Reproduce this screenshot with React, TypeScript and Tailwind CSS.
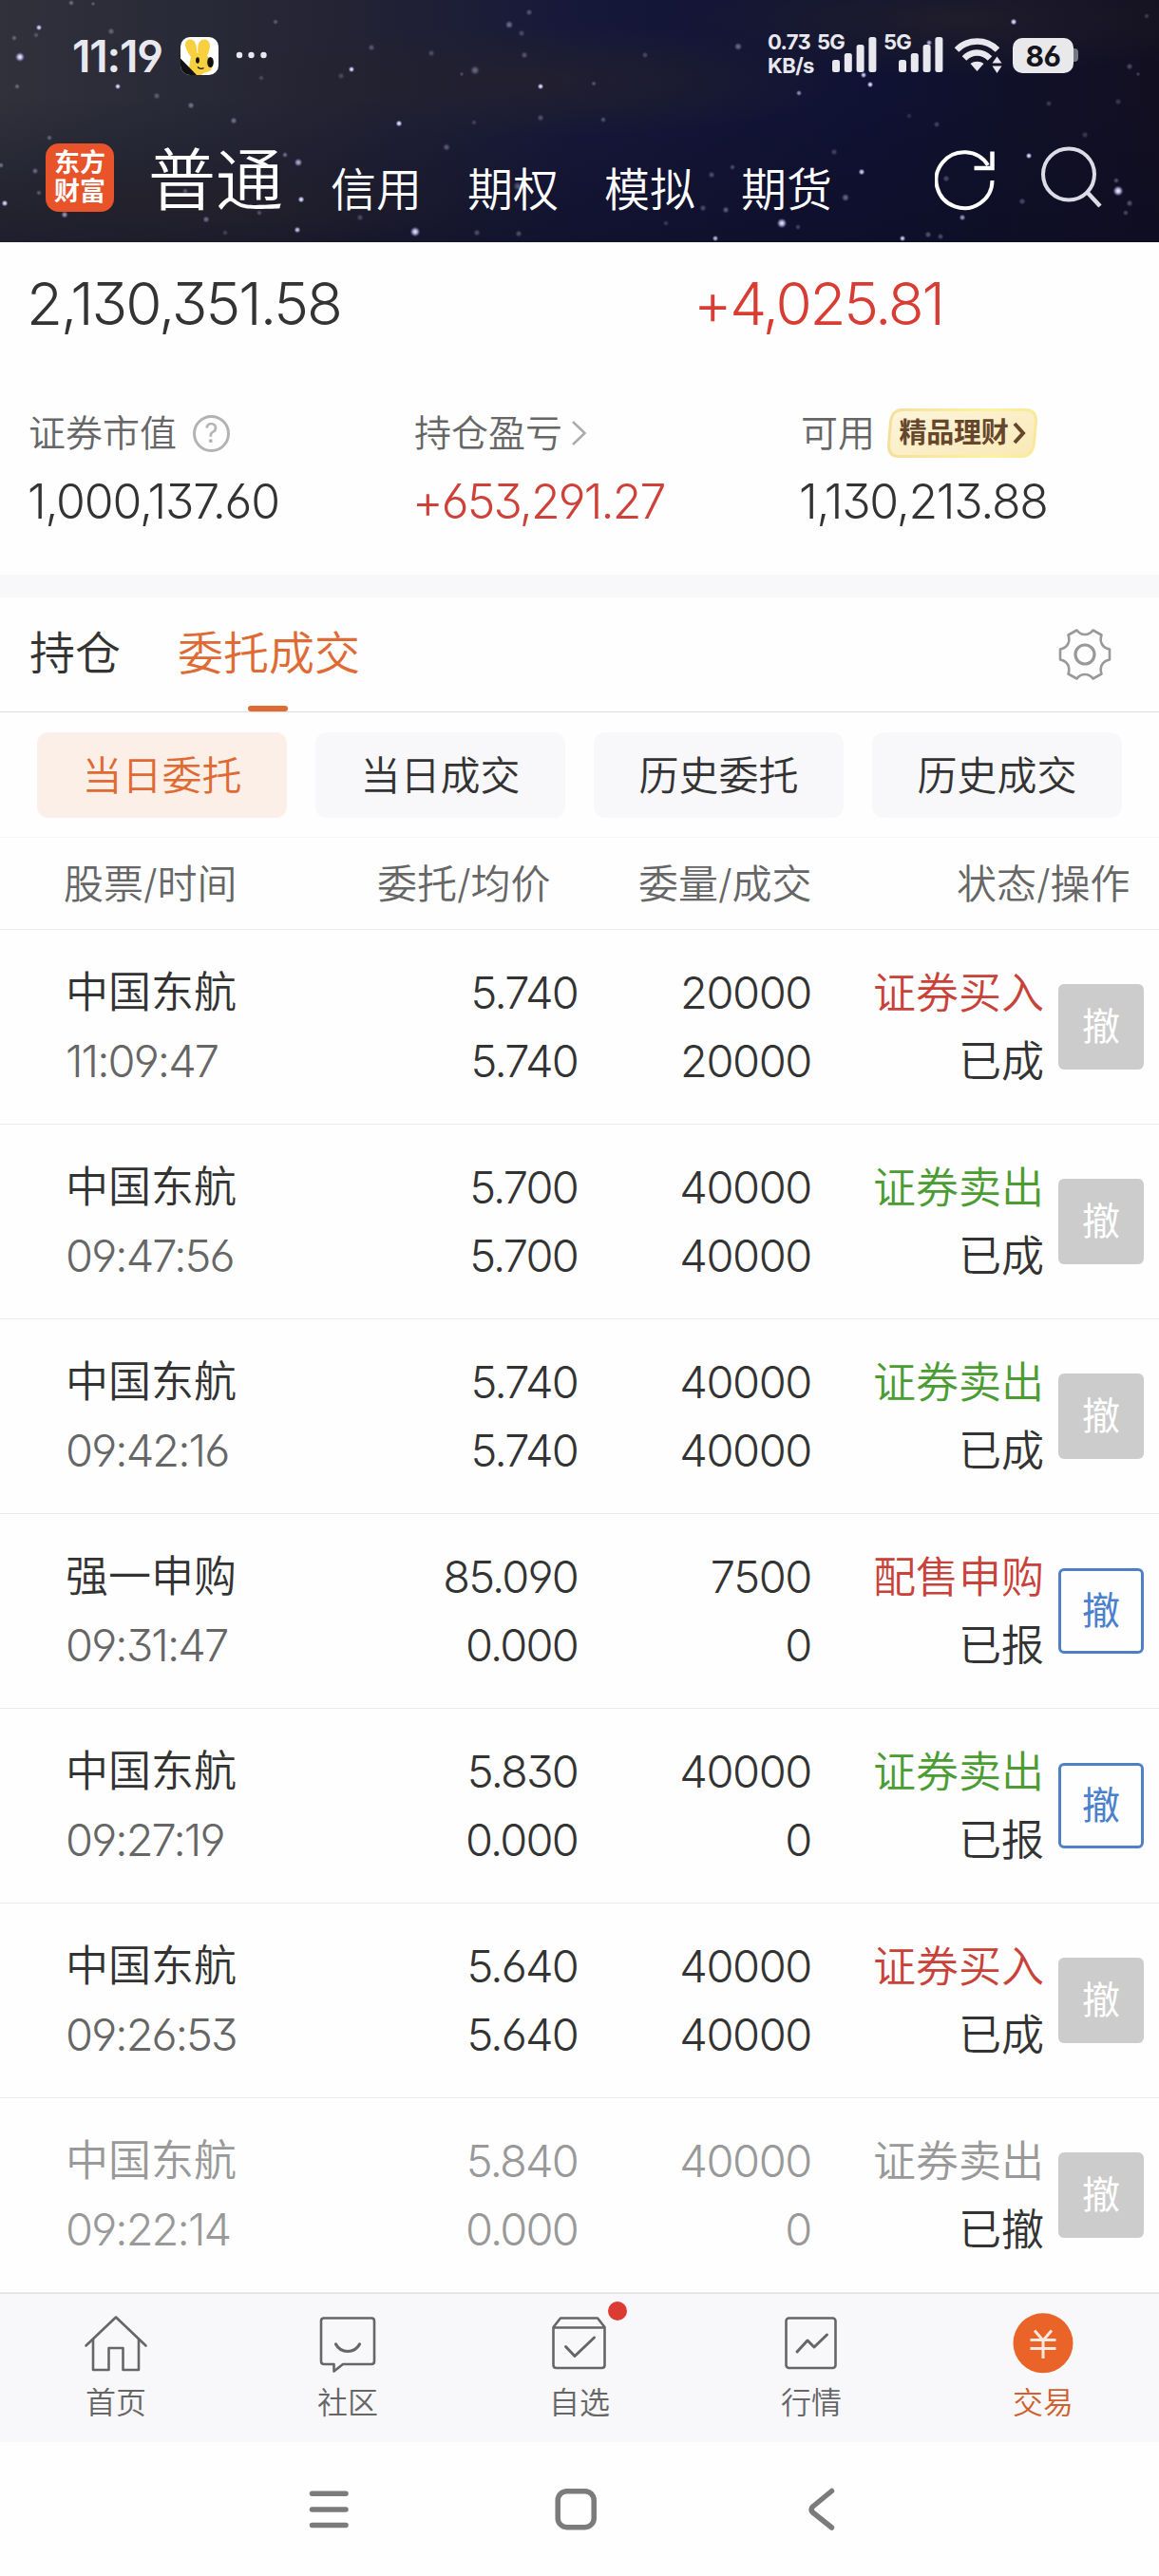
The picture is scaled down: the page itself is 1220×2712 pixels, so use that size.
import type { ReactNode } from 'react';

type Order = {
  name: string;
  time: string;
  price: string;
  avg: string;
  qty: string;
  filled: string;
  side: string;
  tone: string;
  status: string;
  cancel?: boolean;
  muted?: boolean;
};

const RED = 'text-[#c9423a]';
const GREEN = 'text-[#4b9c33]';
const GRAY = 'text-[#999999]';

const ORDERS: Order[] = [
  { name: '中国东航', time: '11:09:47', price: '5.740', avg: '5.740', qty: '20000', filled: '20000', side: '证券买入', tone: RED, status: '已成' },
  { name: '中国东航', time: '09:47:56', price: '5.700', avg: '5.700', qty: '40000', filled: '40000', side: '证券卖出', tone: GREEN, status: '已成' },
  { name: '中国东航', time: '09:42:16', price: '5.740', avg: '5.740', qty: '40000', filled: '40000', side: '证券卖出', tone: GREEN, status: '已成' },
  { name: '强一申购', time: '09:31:47', price: '85.090', avg: '0.000', qty: '7500', filled: '0', side: '配售申购', tone: RED, status: '已报', cancel: true },
  { name: '中国东航', time: '09:27:19', price: '5.830', avg: '0.000', qty: '40000', filled: '0', side: '证券卖出', tone: GREEN, status: '已报', cancel: true },
  { name: '中国东航', time: '09:26:53', price: '5.640', avg: '5.640', qty: '40000', filled: '40000', side: '证券买入', tone: RED, status: '已成' },
  { name: '中国东航', time: '09:22:14', price: '5.840', avg: '0.000', qty: '40000', filled: '0', side: '证券卖出', tone: GRAY, status: '已撤', muted: true },
];

/* x, y, radius, brightness */
const STARS: [number, number, number, number][] = [
  [41, 29, 2.6, 0.95], [21, 60, 4, 1], [15, 40, 2.5, 0.4], [38, 37, 2.5, 0.3], [117, 33, 3, 0.4], [124, 91, 2.5, 1], [18, 91, 2.5, 0.4],
  [165, 101, 3, 0.35], [201, 111, 3, 0.5], [246, 127, 3, 0.5], [290, 23, 2.5, 0.35], [75, 3, 2.5, 0.45], [98, 4, 2, 0.35], [275, 82, 2.5, 0.25],
  [370, 73, 2.6, 1], [359, 80, 3, 0.25], [391, 50, 3, 0.35], [454, 56, 3, 0.3], [500, 74, 4, 0.45], [486, 78, 2, 0.3], [536, 26, 3.5, 0.5],
  [557, 13, 3, 0.35], [549, 35, 3, 0.3], [552, 58, 3, 0.35], [569, 91, 2.6, 1], [569, 124, 3, 0.35], [420, 130, 2.8, 1], [470, 155, 3.2, 0.4],
  [499, 129, 2.5, 0.25], [52, 145, 2.5, 0.4], [37, 180, 2.8, 0.45], [41, 203, 2.5, 0.35], [5, 214, 2.8, 0.95], [68, 226, 3, 0.6], [1, 174, 2.5, 0.5],
  [314, 171, 3.5, 0.7], [300, 163, 2.5, 0.5], [317, 210, 2.8, 1], [217, 231, 3, 0.5], [273, 224, 2.5, 0.35], [313, 242, 2.8, 0.85], [379, 229, 3, 0.3],
  [437, 244, 4.2, 0.95], [502, 245, 3, 0.35], [546, 246, 3, 0.35], [545, 196, 4, 0.4], [195, 201, 2.5, 0.4], [237, 245, 2.5, 0.25],
  [679, 58, 2.8, 0.3], [777, 49, 3.4, 0.5], [1067, 23, 2.8, 1], [1207, 17, 2.5, 0.25], [625, 88, 2.3, 0.35], [841, 98, 2.5, 0.6], [916, 89, 2.6, 1],
  [909, 79, 2.6, 0.9], [635, 126, 2.6, 0.35], [978, 45, 2.6, 0.8], [1189, 70, 3, 0.35], [1104, 109, 2.8, 0.25], [1177, 107, 3, 0.25], [986, 131, 2.8, 0.3],
  [957, 122, 2.5, 0.2], [1142, 142, 3, 0.25], [878, 160, 3, 0.3], [1083, 164, 2.6, 1], [907, 181, 2.8, 0.9], [749, 184, 3, 0.35], [771, 176, 2.5, 0.35],
  [890, 208, 3.4, 0.5], [740, 219, 3, 0.35], [764, 221, 3, 0.45], [823, 235, 4.2, 0.95], [840, 239, 2.5, 0.3], [1013, 229, 2.8, 0.65], [753, 251, 2.6, 0.8],
  [950, 251, 2.6, 0.9], [977, 247, 3, 0.4], [990, 249, 2.8, 0.35], [1177, 201, 4.4, 1], [1189, 214, 3, 0.4], [1185, 224, 2.5, 0.35], [1076, 212, 3, 0.35],
  [1175, 190, 2.5, 0.4], [701, 235, 2.5, 0.25], [996, 188, 3, 0.35], [1198, 78, 2, 0.3],
];

function Sky() {
  return (
    <svg className="absolute inset-0" width="1220" height="255" viewBox="0 0 1220 255">
      <defs>
        <linearGradient id="base" x1="0" y1="0" x2="1" y2="0">
          <stop offset="0" stopColor="#30313b" />
          <stop offset="0.3" stopColor="#232334" />
          <stop offset="0.5" stopColor="#16183a" />
          <stop offset="0.75" stopColor="#0f1233" />
          <stop offset="1" stopColor="#120f20" />
        </linearGradient>
        <linearGradient id="shade" x1="0" y1="0" x2="0" y2="1">
          <stop offset="0.4" stopColor="#0c0c22" stopOpacity="0" />
          <stop offset="1" stopColor="#0c0c22" stopOpacity="0.5" />
        </linearGradient>
        <radialGradient id="haze">
          <stop offset="0" stopColor="#262229" stopOpacity="0.7" />
          <stop offset="1" stopColor="#262229" stopOpacity="0" />
        </radialGradient>
        <radialGradient id="glow">
          <stop offset="0" stopColor="#ffffff" />
          <stop offset="0.45" stopColor="#cfcaf5" stopOpacity="0.8" />
          <stop offset="1" stopColor="#7d74d0" stopOpacity="0" />
        </radialGradient>
      </defs>
      <rect width="1220" height="255" fill="url(#base)" />
      <rect width="1220" height="255" fill="url(#shade)" />
      <ellipse cx="560" cy="85" rx="340" ry="60" fill="url(#haze)" />
      <ellipse cx="1000" cy="20" rx="300" ry="60" fill="url(#haze)" />
      <ellipse cx="200" cy="215" rx="300" ry="50" fill="url(#haze)" />
      {STARS.map(([x, y, r, o]) => (
        <circle key={`${x}-${y}`} cx={x} cy={y} r={r * 1.3} fill="url(#glow)" opacity={o < 0.6 ? o * 0.8 : o} />
      ))}
    </svg>
  );
}

function Signal() {
  return (
    <svg width="48" height="40" viewBox="0 0 48 40" fill="#e8e8ee">
      <rect x="0" y="27" width="8" height="13" rx="2.5" />
      <rect x="12.8" y="20" width="8" height="20" rx="2.5" />
      <rect x="25.6" y="11" width="8" height="29" rx="2.5" />
      <rect x="38.4" y="3" width="8" height="37" rx="2.5" />
    </svg>
  );
}

function StatusBar() {
  return (
    <div className="relative flex h-[118px] pt-[34px] text-[#e8e8ee]">
      <span className="ml-[76px] w-[114px] text-[46px] leading-[50px] font-semibold tracking-[-1.200px]">11:19</span>
      <svg className="mt-[5px]" width="40" height="40" viewBox="0 0 40 40">
        <defs>
          <clipPath id="tile"><rect width="40" height="40" rx="10" /></clipPath>
        </defs>
        <g clipPath="url(#tile)">
          <rect width="40" height="40" fill="#fff" />
          <path d="M5 9C4 3 11 0 15 5C17 9 17 13 17.500 17H18.500C18 12 18 6 21 4C25 1 31 3 31 9C31 13 29 17 28 20C33 23 35 28 33 33C31 38 25 36 22 40H10C8 32 10 26 11 21C8 17 6 13 5 9Z" fill="#f7cf3f" />
          <ellipse cx="18" cy="24.500" rx="1.900" ry="3.200" fill="#111" />
          <ellipse cx="31.500" cy="26.500" rx="3.300" ry="5.500" fill="#111" />
          <path d="M18 31.500Q21 34.500 24.500 32.500" stroke="#111" strokeWidth="1.200" fill="none" />
          <path d="M0 22.500L17 40H0Z" fill="#111" />
        </g>
      </svg>
      <svg className="mt-[20px] ml-[18px]" width="36" height="8" viewBox="0 0 36 8" fill="#e8e8ee">
        <circle cx="4" cy="4" r="3.200" />
        <circle cx="16.500" cy="4" r="3.200" />
        <circle cx="29.500" cy="4" r="3.200" />
      </svg>
      <div className="ml-auto flex">
        <div className="w-[52px] text-[22px] leading-[25px] font-bold tracking-[-0.6px]">
          <div className="-mt-[2px]">0.73</div>
          <div>KB/s</div>
        </div>
        <div className="relative w-[70px] pt-[2px] pl-[16px]">
          <span className="absolute top-[-2px] left-0 text-[22px] leading-[25px] font-bold tracking-[-0.8px]">5G</span>
          <Signal />
        </div>
        <div className="relative w-[70px] pt-[2px] pl-[16px]">
          <span className="absolute top-[-2px] left-0 text-[22px] leading-[25px] font-bold tracking-[-0.8px]">5G</span>
          <Signal />
        </div>
        <svg className="mt-[5px] ml-[4px]" width="54" height="40" viewBox="0 0 54 40" fill="none" stroke="#e8e8ee" strokeWidth="6.500">
          <path d="M3 13.500C15 1.500 34 1.500 46 13.500" />
          <path d="M11 22.500C19 14.500 30 14.500 38 22.500" />
          <path d="M24.500 36L17.500 28C21.500 25 27.500 25 31.500 28Z" fill="#e8e8ee" stroke="none" />
          <path d="M45.500 20.500L50.500 27.500H40.500ZM45.500 38L50.500 30.500H40.500Z" fill="#e8e8ee" stroke="none" />
        </svg>
        <div className="mt-[6px] ml-[8px] flex h-[37px] w-[64px] items-center justify-center rounded-[10px] bg-[#e9e9ec] text-[30px] leading-none font-bold tracking-[-0.5px] text-[#15151c]">
          86
        </div>
        <div className="mt-[17px] mr-[85px] h-[14px] w-[5px] rounded-r-[4px] bg-[#77777f]" />
      </div>
    </div>
  );
}

function Header() {
  return (
    <header className="relative h-[255px] overflow-hidden">
      <Sky />
      <StatusBar />
      <div className="relative flex h-[137px] pl-[48px] font-[350] text-white">
        <div className="mt-[33px] flex h-[72px] w-[72px] flex-col items-center justify-center rounded-[14px] bg-[#e9532a] text-[27px] leading-[30px] font-bold">
          <span>东方</span>
          <span>财富</span>
        </div>
        <span className="mt-[32px] ml-[36px] w-[192px] text-[71px] leading-[78px] whitespace-nowrap">普通</span>
        <nav className="mt-[51px] flex gap-[48px] text-[48px] leading-[62px] whitespace-nowrap">
          <span>信用</span>
          <span>期权</span>
          <span>模拟</span>
          <span>期货</span>
        </nav>
        <svg className="mt-[37px] ml-[108px]" width="68" height="68" viewBox="0 0 68 68" fill="none" stroke="#fff" strokeWidth="4">
          <path d="M60.500 35A29.500 29.500 0 1 1 56 19" />
          <path d="M60.500 4.500V22H41.500" strokeWidth="4.500" />
        </svg>
        <svg className="mt-[34px] ml-[43px]" width="70" height="70" viewBox="0 0 70 70" fill="none" stroke="#dcdce6" strokeWidth="4">
          <circle cx="30" cy="31.500" r="27" />
          <path d="M50 51L63 65" strokeWidth="4.500" />
        </svg>
      </div>
    </header>
  );
}

function Summary() {
  return (
    <section className="h-[350px] bg-[#fefefe] pt-[26px] text-[#333333]">
      <div className="flex text-[62px] leading-[78px] font-[350]">
        <span className="ml-[28px] w-[702px] tracking-[-2px]">2,130,351.58</span>
        <span className="tracking-[-2.300px] text-[#d83d33]">+4,025.81</span>
      </div>
      <div className="mt-[70px] flex h-[54px] items-center text-[39px] leading-[54px] font-[350] text-[#666666]">
        <div className="ml-[30px] flex w-[406px] items-center">
          证券市值
          <span className="ml-[17px] flex size-[39px] items-center justify-center rounded-full border-[3px] border-[#b3b3b3] text-[28px] leading-none font-normal text-[#b3b3b3]">?</span>
        </div>
        <div className="flex w-[407px] items-center">
          持仓盈亏
          <svg className="ml-[8px]" width="20" height="28" viewBox="0 0 20 28" fill="none" stroke="#aaaaaa" strokeWidth="2.500">
            <path d="M3 2L15.500 14L3 26" />
          </svg>
        </div>
        <span>可用</span>
        <div className="relative ml-[13px] flex h-[52px] w-[158px] items-center justify-center gap-[4px] text-[29px] font-bold text-[#66472c]">
          <svg className="absolute inset-0" width="158" height="52" viewBox="0 0 158 52">
            <defs>
              <linearGradient id="gold" x1="0" y1="0" x2="1" y2="1">
                <stop offset="0" stopColor="#fdf5dd" />
                <stop offset="1" stopColor="#fae9b4" />
              </linearGradient>
              <linearGradient id="rim" x1="0" y1="0" x2="1" y2="0">
                <stop offset="0" stopColor="#f4e09c" />
                <stop offset="0.7" stopColor="#fcf3a2" />
                <stop offset="1" stopColor="#f8e99a" />
              </linearGradient>
            </defs>
            <path d="M16 1.500H145Q156.500 1.500 156.500 13L154.500 36Q153 50.500 140 50.500H12Q1.500 50.500 1.500 39L3.500 14Q5 1.500 16 1.500Z" fill="url(#gold)" stroke="url(#rim)" strokeWidth="3" />
          </svg>
          <span className="relative tracking-[-0.200px]">精品理财</span>
          <svg className="relative" width="14" height="24" viewBox="0 0 14 24" fill="none" stroke="#66472c" strokeWidth="4">
            <path d="M2 2L11 12L2 22" />
          </svg>
        </div>
      </div>
      <div className="mt-[16px] flex text-[50px] leading-[58px] font-[320]">
        <span className="ml-[29px] w-[405px] tracking-[-1.200px]">1,000,137.60</span>
        <span className="w-[407px] tracking-[-1.900px] text-[#cf4038]">+653,291.27</span>
        <span className="tracking-[-1.300px]">1,130,213.88</span>
      </div>
    </section>
  );
}

function Tabs() {
  return (
    <div className="flex h-[121px] border-b border-[#dddddd] bg-[#fefefe] pl-[31px] text-[48px] leading-[118px] font-[350]">
      <span className="w-[156px] text-[#333333]">持仓</span>
      <div className="relative text-[#e06a33]">
        委托成交
        <span className="absolute bottom-0 left-[74px] h-[6px] w-[42px] rounded-full bg-[#e06a33]" />
      </div>
      <svg className="mt-[30px] mr-[48px] ml-auto" width="60" height="60" viewBox="0 0 60 60" fill="none" stroke="#999999" strokeWidth="2.600" strokeLinejoin="round">
        <path d="M21.500 4.500C26 10.500 34 10.500 38.500 4.500L47.500 9.500C45 17 48.500 23 56 24.500V35.500C48.500 37 45 43 47.500 50.500L38.500 55.500C34 49.500 26 49.500 21.500 55.500L12.500 50.500C15 43 11.500 37 4 35.500V24.500C11.500 23 15 17 12.500 9.500Z" />
        <circle cx="30" cy="30" r="10" strokeWidth="3.200" />
      </svg>
    </div>
  );
}

function Filters() {
  const items = ['当日委托', '当日成交', '历史委托', '历史成交'];
  return (
    <div className="flex h-[132px] gap-[30px] border-b border-[#f5f5f5] bg-[#fefefe] px-[39px] pt-[21px]">
      {items.map((t, i) => (
        <div
          key={t}
          className={`flex h-[90px] w-[263px] items-center justify-center rounded-[12px] text-[42px] font-[350] ${
            i === 0 ? 'bg-[#fcefe7] text-[#e06a33]' : 'bg-[#f8f8fa] text-[#333333]'
          }`}
        >
          {t}
        </div>
      ))}
    </div>
  );
}

function Cancel({ active }: { active?: boolean }) {
  return (
    <div
      className={`mt-[57px] flex size-[90px] items-center justify-center rounded-[6px] text-[40px] leading-none font-normal ${
        active ? 'border-[3px] border-[#4f80c6] text-[#4a80cc]' : 'bg-[#cccccc] text-white'
      }`}
    >
      撤
    </div>
  );
}

function Row({ o }: { o: Order }) {
  const main = o.muted ? 'text-[#999999]' : 'text-[#333333]';
  const time = o.muted ? 'text-[#999999]' : 'text-[#666666]';
  return (
    <div className="flex h-[205px] border-b border-[#ebebeb] bg-[#fefefe] text-[47px] leading-[72px] font-[320]">
      <div className={`ml-[69px] w-[240px] pt-[30px] ${main}`}>
        <div className="text-[45px] font-[350]">{o.name}</div>
        <div className={`tracking-[-1.900px] ${time}`}>{o.time}</div>
      </div>
      <div className={`w-[299px] pt-[30px] text-right tracking-[-1.800px] ${main}`}>
        <div>{o.price}</div>
        <div>{o.avg}</div>
      </div>
      <div className={`w-[246px] pt-[30px] text-right tracking-[-1.400px] ${main}`}>
        <div>{o.qty}</div>
        <div>{o.filled}</div>
      </div>
      <div className="mr-[15px] w-[245px] pt-[31px] text-right text-[45px] font-[350]">
        <div className={o.tone}>{o.side}</div>
        <div className="text-[#333333]">{o.status}</div>
      </div>
      <Cancel active={o.cancel} />
    </div>
  );
}

function Orders() {
  return (
    <section>
      <div className="flex h-[97px] border-b border-[#ebebeb] bg-[#fefefe] text-[42px] leading-[97px] font-[350] text-[#666666]">
        <span className="ml-[67px] w-[330px]">股票/时间</span>
        <span className="w-[275px]">委托/均价</span>
        <span className="w-[335px]">委量/成交</span>
        <span>状态/操作</span>
      </div>
      {ORDERS.map((o) => (
        <Row key={o.time} o={o} />
      ))}
    </section>
  );
}

function Icon({ children }: { children: ReactNode }) {
  return (
    <svg width="70" height="66" viewBox="0 0 70 66" fill="none" stroke="#666666" strokeWidth="2.600" strokeLinecap="round" strokeLinejoin="round">
      {children}
    </svg>
  );
}

function BottomNav() {
  const items = [
    {
      label: '首页',
      icon: (
        <>
          <path d="M3.500 36.500L35 6.500L66.500 36.500" />
          <path d="M11 30V62H27.500V39H42.500V62H59V30" />
        </>
      ),
    },
    {
      label: '社区',
      icon: (
        <>
          <path d="M10 7.500H60Q63 7.500 63 10.500V53Q63 56 60 56H30L20.500 63.500V56H10Q7 56 7 53V10.500Q7 7.500 10 7.500Z" />
          <path d="M22.500 35C28 45 42 45 47.500 35" strokeWidth="3.200" />
        </>
      ),
    },
    {
      label: '自选',
      dot: true,
      icon: (
        <>
          <path d="M7.500 17L15 7.500H54L61.500 17V57Q61.500 60 58.500 60H10.500Q7.500 60 7.500 57ZM7.500 17.500H61.500" />
          <path d="M20.500 37.500L30 47.500L50.500 28" strokeWidth="3" />
        </>
      ),
    },
    {
      label: '行情',
      icon: (
        <>
          <rect x="8.500" y="7.500" width="52" height="52.500" rx="3" />
          <path d="M20 43L31 31L38 38L51.500 25" strokeWidth="3" />
        </>
      ),
    },
    {
      label: '交易',
      active: true,
      icon: (
        <>
          <circle cx="35" cy="33.800" r="31.500" fill="#ea6329" stroke="none" />
          <path d="M26 20.500L35 31L44 20.500M35 31V50M21.500 30.500H48.500M21.500 39.500H48.500" stroke="#fde9dd" strokeWidth="3" strokeLinecap="butt" />
        </>
      ),
    },
  ];
  return (
    <nav className="grid h-[157px] grid-cols-5 border-t border-[#e3e3e6] bg-[#f8f8fa]">
      {items.map((it) => (
        <div key={it.label} className="relative flex flex-col items-center pt-[18px]">
          <Icon>{it.icon}</Icon>
          <span className={`mt-[10px] text-[32px] leading-[42px] font-[350] ${it.active ? 'text-[#d0602f]' : 'text-[#666666]'}`}>{it.label}</span>
          {it.dot && <span className="absolute top-[8px] left-[152px] size-[20px] rounded-full bg-[#dc3b33]" />}
        </div>
      ))}
    </nav>
  );
}

function SystemBar() {
  return (
    <div className="flex h-[142px] gap-[200px] bg-[#fefefe] pt-[40px] pl-[316px]">
      <svg width="60" height="60" viewBox="0 0 60 60" stroke="#7b7b7b" strokeWidth="5.500" strokeLinecap="round">
        <path d="M12.500 14.300H48M12.500 31H48M12.500 47.500H48" />
      </svg>
      <svg width="60" height="60" viewBox="0 0 60 60" fill="none" stroke="#7b7b7b" strokeWidth="5.500">
        <rect x="11.200" y="11.700" width="38" height="38" rx="9.500" />
      </svg>
      <svg width="60" height="60" viewBox="0 0 60 60" fill="none" stroke="#7b7b7b" strokeWidth="5.500" strokeLinecap="round" strokeLinejoin="round">
        <path d="M39.500 11.500L19.500 28Q16.500 31 19.500 34L39.500 50" />
      </svg>
    </div>
  );
}

export default function App() {
  return (
    <div className="w-[1220px] overflow-hidden bg-[#fefefe] font-['Inter','Noto_Sans_CJK_SC',sans-serif] [font-feature-settings:'cv03','cv04','cv09'] font-light">
      <Header />
      <Summary />
      <div className="h-[24px] bg-[#f8f8fa]" />
      <Tabs />
      <Filters />
      <Orders />
      <BottomNav />
      <SystemBar />
    </div>
  );
}
